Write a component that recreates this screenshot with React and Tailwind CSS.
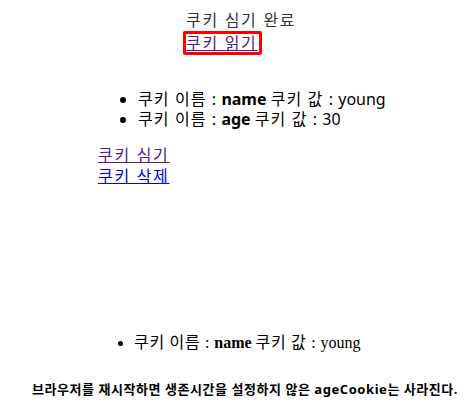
import React from 'react';

const sans = { fontFamily: '"Noto Sans", "Noto Sans CJK KR", sans-serif' };

// hangul in the reference is set wider than Noto CJK, so space it out a bit
function K({ children, className = 'tracking-[1.7px]' }) {
  return <span className={className}>{children}</span>;
}

export default function App() {
  return (
    <div className="w-[473px] h-[403px] bg-white relative overflow-hidden text-black">
      <div className="pt-[10px] pl-[186px] text-[16px] leading-[20px] text-[#333]" style={sans}>
        <p><K>쿠키 심기 완료</K></p>
        <div className="ml-[-3px] mt-[1px] w-[79px] h-[24px] border-[3px] border-[#f00] rounded-[2px]">
          <a href="#" className="text-[#551a8b] underline leading-[18px] block"><K>쿠키 읽기</K></a>
        </div>
      </div>

      <ul className="mt-[34px] pl-[138px] list-disc text-[16px] leading-[20px]" style={sans}>
        <li>
          <K className="tracking-[1.1px]">쿠키 이름 :</K> <b>name</b>{' '}
          <K className="tracking-[1.1px]">쿠키 값 :</K> young
        </li>
        <li>
          <K className="tracking-[1.1px]">쿠키 이름 :</K> <b>age</b>{' '}
          <K className="tracking-[1.1px]">쿠키 값 :</K> 30
        </li>
      </ul>

      <div className="mt-[16px] pl-[98px] text-[16px] leading-[21px]" style={sans}>
        <a href="#" className="block w-fit text-[#551a8b] underline"><K>쿠키 심기</K></a>
        <a href="#" className="block w-fit text-[#0000ee] underline"><K>쿠키 삭제</K></a>
      </div>

      <ul
        className="mt-[146px] pl-[134px] list-disc text-[16px] leading-[20px]"
        style={{ fontFamily: '"Liberation Serif", "Noto Sans CJK KR", serif' }}
      >
        <li>
          <K className="tracking-[0.7px]">쿠키 이름 :</K> <b>name</b>{' '}
          <K className="tracking-[0.7px]">쿠키 값 :</K> young
        </li>
      </ul>

      <p className="mt-[28px] pl-[32px] text-[13px] leading-[16px] font-bold tracking-[0.55px]" style={sans}>
        브라우저를 재시작하면 생존시간을 설정하지 않은 ageCookie는 사라진다.
      </p>
    </div>
  );
}
